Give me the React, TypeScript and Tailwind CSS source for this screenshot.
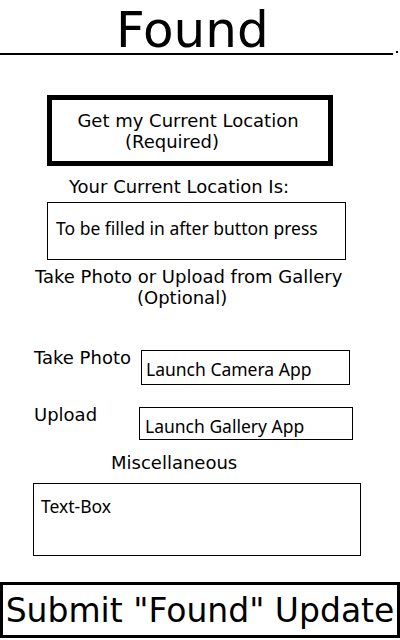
import React from 'react';

const dejavu = "font-['DejaVu_Sans',sans-serif]";
const boxFont = "font-['Noto_Sans',sans-serif]";

const Label = ({ children, className = '' }: any) => (
  <div className={`${dejavu} text-[18px] leading-[21px] text-black ${className}`}>{children}</div>
);

const FieldBox = ({ children, className = '' }: any) => (
  <div className={`${boxFont} border border-black text-[17.5px] text-black flex items-center ${className}`}>
    {children}
  </div>
);

export default function App() {
  return (
    <div className="w-[400px] h-[640px] bg-white flex flex-col overflow-hidden">
      {/* Header */}
      <div className={`${dejavu} text-[50px] leading-[45px] pt-[8px] pl-[116px] text-black`}>Found</div>
      <div className="flex items-start">
        <div className="w-[393px] h-[2px] bg-black" />
        <div className="ml-[3px] -mt-[2px] w-[2px] h-[2px] bg-black" />
      </div>

      {/* Location button */}
      <button className={`${dejavu} mt-[40px] ml-[47px] w-[286px] h-[71px] border-[5px] border-black flex flex-col items-center justify-center text-[18px] leading-[21px] text-black`}>
        <span className="pr-[4px]">Get my Current Location</span>
        <span className="pr-[36px]">(Required)</span>
      </button>

      <Label className="mt-[10px] pl-[69px]">Your Current Location Is:</Label>
      <FieldBox className="mt-[5px] ml-[47px] w-[299px] h-[58px] pl-[8px] pb-[6px]">To be filled in after button press</FieldBox>

      <Label className="mt-[6px] flex flex-col">
        <span className="pl-[35px]">Take Photo or Upload from Gallery</span>
        <span className="pl-[137px]">(Optional)</span>
      </Label>

      <div className="mt-[39px] flex items-start">
        <Label className="ml-[34px] w-[107px]">Take Photo</Label>
        <FieldBox className="mt-[3px] w-[209px] h-[35px] pl-[4px] pt-[3px]">Launch Camera App</FieldBox>
      </div>

      <div className="mt-[19px] flex items-start">
        <Label className="ml-[34px] w-[105px]">Upload</Label>
        <FieldBox className="mt-[3px] w-[214px] h-[33px] pl-[5px] pt-[6px]">Launch Gallery App</FieldBox>
      </div>

      <Label className="mt-[12px] pl-[111px]">Miscellaneous</Label>
      <div className={`${boxFont} mt-[10px] ml-[33px] w-[328px] h-[73px] border border-black text-[17.5px] text-black pl-[7px] pt-[10px] leading-[24px]`}>
        Text-Box
      </div>

      <button className={`${dejavu} mt-[26px] w-[400px] h-[56px] border-[3px] border-black text-[33px] leading-none text-black flex items-center justify-center`}>
        Submit "Found" Update
      </button>
    </div>
  );
}
